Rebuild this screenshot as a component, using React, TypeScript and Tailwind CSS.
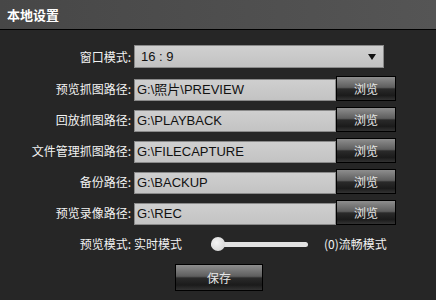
const cjk = "font-['Noto_Sans_CJK_SC',sans-serif]";
const latin = "font-['Liberation_Sans','Noto_Sans_CJK_SC',sans-serif]";

const glossy =
  'bg-[linear-gradient(to_bottom,#8e8e8e_0%,#5e5e5e_45%,#2a2a2a_52%,#1b1b1b_80%,#333333_100%)]';

const paths = [
  { label: '预览抓图路径', value: 'G:\\照片\\PREVIEW' },
  { label: '回放抓图路径', value: 'G:\\PLAYBACK' },
  { label: '文件管理抓图路径', value: 'G:\\FILECAPTURE' },
  { label: '备份路径', value: 'G:\\BACKUP' },
  { label: '预览录像路径', value: 'G:\\REC' },
];

function Label({ text }: { text: string }) {
  return (
    <div className={`w-[131px] shrink-0 text-right text-[12px] leading-none text-[#f2f2f2] ${cjk}`}>
      {text}:
    </div>
  );
}

export default function App() {
  return (
    <div className="w-[436px] h-[300px] bg-[#262626] flex flex-col overflow-hidden">
      {/* Header */}
      <div className="h-[30px] shrink-0 flex items-center pl-[7px] border-b border-black bg-[linear-gradient(to_right,#474747,#555555)]">
        <span className={`text-[13px] font-bold text-white ${cjk}`}>本地设置</span>
      </div>

      <div className="flex flex-col pt-[15px]">
        {/* Window mode */}
        <div className="flex items-center h-[23px]">
          <Label text="窗口模式" />
          <div className="ml-[3px] w-[250px] h-[23px] flex items-center justify-between pl-[6px] pr-[7px] border border-[#8a8a8a] bg-[linear-gradient(to_bottom,#d0d0d0,#c2c2c2)]">
            <span className={`text-[13px] text-[#111] ${latin}`}>16 : 9</span>
            <svg width="8" height="6" viewBox="0 0 8 6">
              <path d="M0 0 H8 L4 6 Z" fill="#111" />
            </svg>
          </div>
        </div>

        {/* Paths */}
        <div className="flex flex-col gap-[6px] mt-[8px]">
          {paths.map((p) => (
            <div key={p.label} className="flex items-center h-[25px]">
              <Label text={p.label} />
              <div className="ml-[3px] mt-[3px] w-[202px] h-[22px] flex items-center pl-[2px] border border-[#8a8a8a] bg-[linear-gradient(to_bottom,#cfcfcf,#c3c3c3)]">
                <span className={`text-[13px] text-[#111] ${latin}`}>{p.value}</span>
              </div>
              <button
                className={`w-[60px] h-[25px] border border-black ${glossy} text-[12px] text-[#e6e6e6] ${cjk}`}
              >
                浏览
              </button>
            </div>
          ))}
        </div>

        {/* Preview mode slider */}
        <div className="flex items-center h-[16px] mt-[11px]">
          <Label text="预览模式" />
          <span className={`ml-[3px] text-[12px] leading-none text-[#f2f2f2] ${cjk}`}>实时模式</span>
          <div className="ml-[29px] relative w-[97px] h-[14px] flex items-center">
            <div className="w-full h-[5px] rounded-full bg-[#e2e2e2]" />
            <div className="absolute left-0 top-0 w-[14px] h-[14px] rounded-full bg-[radial-gradient(circle_at_40%_40%,#f4f4f4,#cfcfcf)]" />
          </div>
          <span className={`ml-[16px] text-[12px] leading-none text-[#f2f2f2] ${cjk}`}>(0)流畅模式</span>
        </div>

        {/* Save */}
        <div className="flex mt-[12px] pl-[175px]">
          <button
            className={`w-[88px] h-[27px] border border-black ${glossy} text-[12px] text-[#e6e6e6] ${cjk}`}
          >
            保存
          </button>
        </div>
      </div>
    </div>
  );
}
